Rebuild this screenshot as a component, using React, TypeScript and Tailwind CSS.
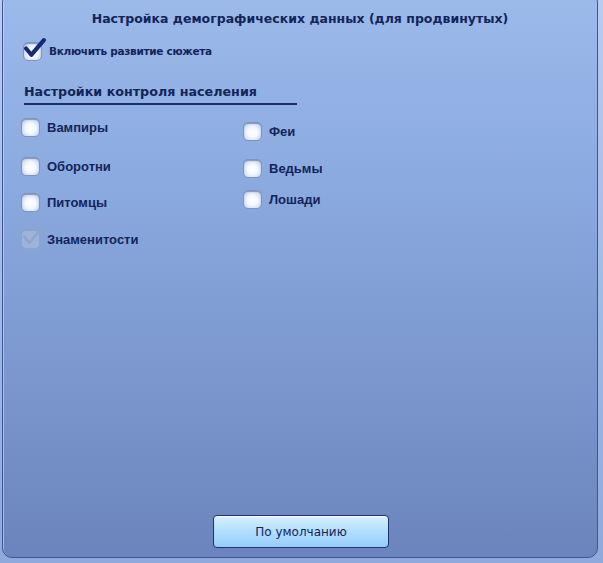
import React from "react";

const navy = "text-[#14245a]";

function Box({ checked = false, disabled = false }: { checked?: boolean; disabled?: boolean }) {
  return (
    <div className="relative w-[19px] h-[19px] shrink-0">
      <div
        className={
          "w-[19px] h-[19px] rounded-[5px] border " +
          (disabled
            ? "border-[#8fa3c9] bg-[#9fb3d9]"
            : "border-[#7f94bf] bg-[radial-gradient(circle_at_50%_55%,#ffffff_0%,#f4f8ff_40%,#c9d6ee_80%,#9aaed6_100%)] shadow-[inset_0_1px_1px_rgba(60,80,130,0.5)]")
        }
      />
      {checked && (
        <svg
          className="absolute left-[1px] top-[-5px]"
          width="23"
          height="23"
          viewBox="0 0 22 22"
        >
          <path
            d="M2 11 L7 17 L19 3"
            fill="none"
            stroke={disabled ? "#8fa6cc" : "#142a78"}
            strokeWidth={disabled ? 2.5 : 4}
            strokeLinecap="round"
            strokeLinejoin="round"
          />
        </svg>
      )}
    </div>
  );
}

function Item({ label, checked, disabled, className = "" }: { label: string; checked?: boolean; disabled?: boolean; className?: string }) {
  return (
    <div className={"flex items-center gap-[7px] " + className}>
      <Box checked={checked} disabled={disabled} />
      <span className={`${navy} text-[13px] font-bold font-['Liberation_Sans',sans-serif]`}>
        {label}
      </span>
    </div>
  );
}

export default function App() {
  return (
    <div className="w-[603px] h-[563px] bg-[linear-gradient(#b6cdf2,#8fa9dc)] relative overflow-hidden">
      <div className="absolute top-0 left-[458px] w-[40px] h-[4px] bg-[#8fb0e4]" />
      <div className="absolute top-[-8px] left-[2px] w-[596px] h-[566px] rounded-[10px] border border-[#3d5793] bg-[linear-gradient(180deg,#9cbaea_0%,#8aa9de_35%,#7a96cc_70%,#6b84bd_100%)] shadow-[inset_1px_1px_0_rgba(200,220,255,0.6)] flex flex-col">
        <div className="pt-[12px] text-center">
          <span className={`${navy} text-[12.5px] font-bold font-['DejaVu_Sans',sans-serif]`}>
            Настройка демографических данных (для продвинутых)
          </span>
        </div>
        <div className="pl-[20px] pt-[13px] flex items-center gap-[7px]">
          <Box checked />
          <span className={`${navy} text-[10.5px] font-bold font-['DejaVu_Sans',sans-serif] tracking-[-0.3px]`}>
            Включить развитие сюжета
          </span>
        </div>
        <div className="pl-[21px] pt-[17px]">
          <div className="w-[273px] border-b-2 border-[#1b2d6b] pb-[1px]">
            <span className={`${navy} text-[12.7px] font-bold font-['DejaVu_Sans',sans-serif]`}>
              Настройки контроля населения
            </span>
          </div>
        </div>
        <div className="pl-[18px] pt-[13px] flex">
          <div className="w-[222px] flex flex-col">
            <Item label="Вампиры" />
            <Item label="Оборотни" className="mt-[19px]" />
            <Item label="Питомцы" className="mt-[17px]" />
            <Item label="Знаменитости" checked disabled className="mt-[17px]" />
          </div>
          <div className="flex flex-col pt-[4px]">
            <Item label="Феи" />
            <Item label="Ведьмы" className="mt-[17px]" />
            <Item label="Лошади" className="mt-[12px]" />
          </div>
        </div>
        <div className="flex-1" />
        <div className="pl-[210px] pb-[9px]">
          <button className="w-[176px] h-[33px] rounded-[4px] border border-[#1e3470] bg-[linear-gradient(180deg,#d8f0ff_0%,#b4e0ff_45%,#94ccf8_100%)] shadow-[inset_0_1px_0_#ffffff] text-[12px] text-[#14245a] font-['DejaVu_Sans',sans-serif]">
            По умолчанию
          </button>
        </div>
      </div>
    </div>
  );
}
